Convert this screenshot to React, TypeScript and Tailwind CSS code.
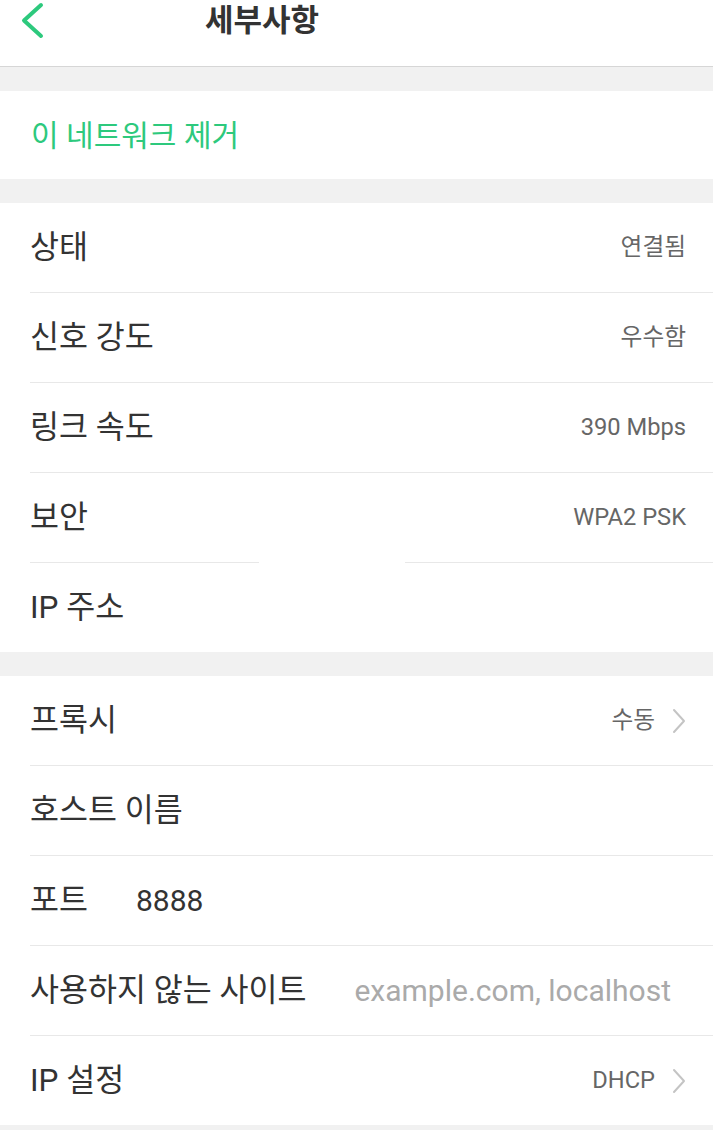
import React from "react";

const font = { fontFamily: 'Roboto, "Noto Sans CJK KR", "Noto Sans", sans-serif' };

function Chevron() {
  return (
    <svg width="14" height="26" viewBox="0 0 14 26" className="ml-[17px]">
      <path d="M2 2 L12 13 L2 24" fill="none" stroke="#c4c4c4" strokeWidth="2" strokeLinecap="round" strokeLinejoin="round" />
    </svg>
  );
}

function Sep() {
  return <div className="ml-[30px] h-px bg-[#e8e8e8]" />;
}

function Row({ label, value, chevron, input, inputGray }: { label: string; value?: string; chevron?: boolean; input?: string; inputGray?: boolean }) {
  return (
    <div className="flex h-[89px] items-center pl-[30px] pr-[27px]">
      <span className="text-[31.5px] text-[#333333] whitespace-nowrap">{label}</span>
      {input !== undefined && (
        <span className={`ml-[48px] text-[30px] whitespace-nowrap ${inputGray ? "text-[#aaaaaa]" : "text-[#333333]"}`}>{input}</span>
      )}
      <div className="flex-1" />
      {value && <span className="text-[23.7px] text-[#666666] whitespace-nowrap">{value}</span>}
      {chevron && <Chevron />}
    </div>
  );
}

export default function App() {
  return (
    <div className="w-[713px] h-[1130px] bg-[#f1f1f1] overflow-hidden" style={font}>
      <div className="h-[67px] bg-white border-b border-[#d6d6d6] relative">
        <svg width="24" height="40" viewBox="0 0 24 40" className="absolute left-[20px] top-[1px]">
          <path d="M21 4 L4 19.5 L21 35" fill="none" stroke="#2dc97d" strokeWidth="4" strokeLinecap="round" strokeLinejoin="round" />
        </svg>
        <div className="absolute left-[205px] top-[0px] text-[31px] font-bold text-[#333333] leading-[42px]">세부사항</div>
      </div>
      <div className="h-[24px]" />
      <div className="bg-white h-[88px] flex items-center pl-[31px]">
        <span className="text-[30px] text-[#2dc97d]">이 네트워크 제거</span>
      </div>
      <div className="h-[24px]" />
      <div className="bg-white">
        <Row label="상태" value="연결됨" />
        <Sep />
        <Row label="신호 강도" value="우수함" />
        <Sep />
        <Row label="링크 속도" value="390 Mbps" />
        <Sep />
        <Row label="보안" value="WPA2 PSK" />
        <div className="flex h-px">
          <div className="ml-[30px] w-[229px] bg-[#e8e8e8]" />
          <div className="ml-[146px] flex-1 bg-[#e8e8e8]" />
        </div>
        <Row label="IP 주소" />
      </div>
      <div className="h-[24px]" />
      <div className="bg-white">
        <Row label="프록시" value="수동" chevron />
        <Sep />
        <Row label="호스트 이름" input="" />
        <Sep />
        <Row label="포트" input="8888" />
        <Sep />
        <Row label="사용하지 않는 사이트" input="example.com, localhost" inputGray />
        <Sep />
        <Row label="IP 설정" value="DHCP" chevron />
      </div>
    </div>
  );
}
